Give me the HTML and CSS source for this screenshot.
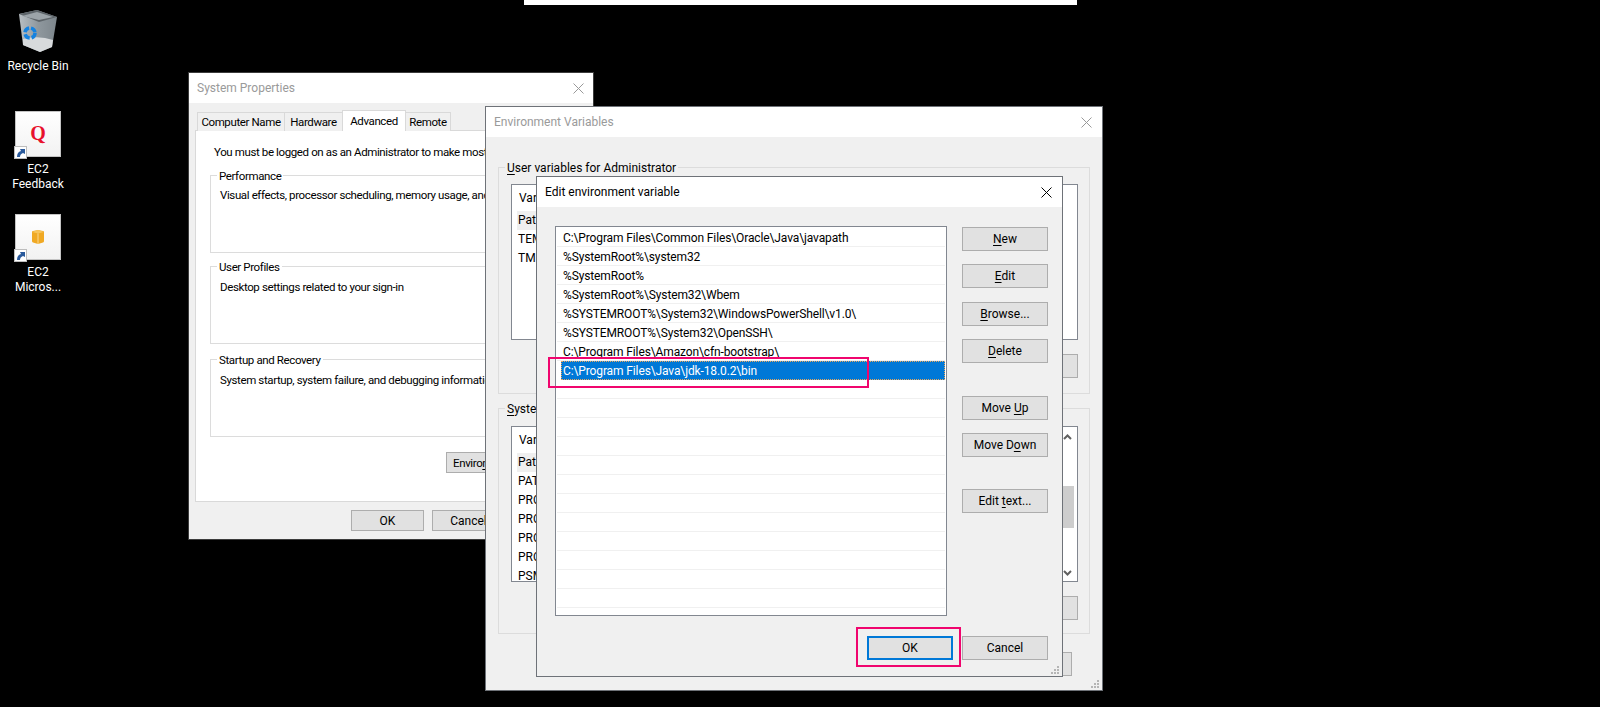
FILE: index.html
```html
<!DOCTYPE html>
<html lang="en">
<head>
<meta charset="utf-8">
<title>Environment variables</title>
<link rel="stylesheet" href="styles.css">
</head>
<body>
<main class="desktop">
  <div class="strip"></div>

  <div class="desk-icon recycle">
    <svg class="bin" viewBox="0 0 38 42" width="38" height="42">
      <defs>
        <linearGradient id="binfill" x1="0" y1="0" x2="1" y2="0">
          <stop offset="0" stop-color="#b9bfc3"/>
          <stop offset="0.5" stop-color="#8f989e"/>
          <stop offset="1" stop-color="#7d868c"/>
        </linearGradient>
      </defs>
      <path d="M0 4 L18 0 L38 7 L33 37 L21 42 L4 35 Z" fill="url(#binfill)"/>
      <path d="M0 4 L18 0 L38 7 L20 12 Z" fill="#5d6469"/>
      <path d="M3 6 L18 2 L34 7 L20 10 Z" fill="#9ca4a9"/>
      <path d="M4 29 Q20 25 34 30 L33 37 L21 42 L4 35 Z" fill="#d7dadc"/>
      <circle cx="11" cy="23" r="5" fill="none" stroke="#1482e0" stroke-width="3.500" stroke-dasharray="6 2"/>
    </svg>
    <span class="desk-label">Recycle Bin</span>
  </div>

  <div class="desk-icon feedback">
    <div class="tile">
      <span class="q">Q</span>
      <svg class="shortcut" viewBox="0 0 13 13" width="13" height="13">
        <rect x="0.500" y="0.500" width="12" height="12" fill="#fff" stroke="#bdbdbd"/>
        <path d="M3 11 Q3 6 7 5 L6 3 L11 3 L11 8 L9 7 Q6 8 6 11 Z" fill="#2a5a9c"/>
      </svg>
    </div>
    <span class="desk-label">EC2<br>Feedback</span>
  </div>

  <div class="desk-icon micro">
    <div class="tile">
      <svg class="cube" viewBox="0 0 14 14" width="14" height="14">
        <path d="M1 2 Q1 1 2 1 L7 0 L12 1 Q13 1 13 2 L13 11 Q13 12 12 12.500 L7 14 L2 12.500 Q1 12 1 11 Z" fill="#f0a924"/>
        <path d="M1 2 L7 3.500 L13 2 L7 0 Z" fill="#f7c55c"/>
        <path d="M6.500 3.500 H7.500 V14 H6.500 Z" fill="#f9d88f"/>
      </svg>
      <svg class="shortcut" viewBox="0 0 13 13" width="13" height="13">
        <rect x="0.500" y="0.500" width="12" height="12" fill="#fff" stroke="#bdbdbd"/>
        <path d="M3 11 Q3 6 7 5 L6 3 L11 3 L11 8 L9 7 Q6 8 6 11 Z" fill="#2a5a9c"/>
      </svg>
    </div>
    <span class="desk-label">EC2<br>Micros...</span>
  </div>

  <section class="window sysprops">
    <header class="titlebar inactive">
      <span>System Properties</span>
      <svg class="close" viewBox="0 0 11 11" width="11" height="11"><path d="M0.500 0.500 L10.500 10.500 M10.500 0.500 L0.500 10.500" stroke="#999" fill="none"/></svg>
    </header>
    <div class="sys-body">
      <nav class="tabs">
        <span class="tab t1">Computer Name</span>
        <span class="tab t2">Hardware</span>
        <span class="tab t3 current">Advanced</span>
        <span class="tab t4">Remote</span>
      </nav>
      <div class="panel">
        <p class="notice">You must be logged on as an Administrator to make most of these changes.</p>
        <fieldset class="group g-perf">
          <legend>Performance</legend>
          <p>Visual effects, processor scheduling, memory usage, and virtual memory</p>
        </fieldset>
        <fieldset class="group g-prof">
          <legend>User Profiles</legend>
          <p>Desktop settings related to your sign-in</p>
        </fieldset>
        <fieldset class="group g-start">
          <legend>Startup and Recovery</legend>
          <p>System startup, system failure, and debugging information</p>
        </fieldset>
        <div class="env-row"><span class="btn env-btn"><span>Enviro<u>n</u>ment Variables...</span></span></div>
      </div>
      <div class="sys-actions">
        <span class="btn sys-btn">OK</span>
        <span class="btn sys-btn">Cancel</span>
      </div>
    </div>
  </section>

  <section class="window envvars">
    <header class="titlebar inactive">
      <span>Environment Variables</span>
      <svg class="close" viewBox="0 0 11 11" width="11" height="11"><path d="M0.500 0.500 L10.500 10.500 M10.500 0.500 L0.500 10.500" stroke="#999" fill="none"/></svg>
    </header>
    <div class="env-body">
      <fieldset class="group env-group user">
        <legend><u>U</u>ser variables for Administrator</legend>
        <div class="var-list user-list">
          <div class="var-rows">
            <div class="var-head">Variable</div>
            <div class="var-row first">Path</div>
            <div class="var-row">TEMP</div>
            <div class="var-row">TMP</div>
          </div>
        </div>
        <div class="env-actions"><span class="btn env-action"></span></div>
      </fieldset>
      <fieldset class="group env-group system">
        <legend><u>S</u>ystem variables</legend>
        <div class="var-list sys-list">
          <div class="var-rows">
            <div class="var-head">Variable</div>
            <div class="var-row first">Path</div>
            <div class="var-row">PATHEXT</div>
            <div class="var-row">PROCESSOR_ARCHITECTURE</div>
            <div class="var-row">PROCESSOR_IDENTIFIER</div>
            <div class="var-row">PROCESSOR_LEVEL</div>
            <div class="var-row">PROCESSOR_REVISION</div>
            <div class="var-row">PSModulePath</div>
          </div>
          <div class="scrollbar">
            <svg viewBox="0 0 9 6" width="9" height="6"><path d="M1 5 L4.500 1.500 L8 5" stroke="#606060" stroke-width="2" fill="none"/></svg>
            <div class="thumb"></div>
            <svg viewBox="0 0 9 6" width="9" height="6"><path d="M1 1 L4.500 4.500 L8 1" stroke="#606060" stroke-width="2" fill="none"/></svg>
          </div>
        </div>
        <div class="env-actions"><span class="btn env-action"></span></div>
      </fieldset>
      <div class="env-foot"><span class="btn foot-btn"></span></div>
    </div>
    <svg class="grip" viewBox="0 0 8 8" width="8" height="8"><path d="M6 0h2v2h-2zM3 3h2v2h-2zM6 3h2v2h-2zM0 6h2v2h-2zM3 6h2v2h-2zM6 6h2v2h-2z" fill="#b5b5b5"/></svg>
  </section>

  <section class="window editvar">
    <header class="titlebar">
      <span>Edit environment variable</span>
      <svg class="close" viewBox="0 0 11 11" width="11" height="11"><path d="M0.500 0.500 L10.500 10.500 M10.500 0.500 L0.500 10.500" stroke="#000" fill="none"/></svg>
    </header>
    <div class="edit-body">
      <div class="edit-main">
        <ul class="path-list">
          <li>C:\Program Files\Common Files\Oracle\Java\javapath</li>
          <li>%SystemRoot%\system32</li>
          <li>%SystemRoot%</li>
          <li>%SystemRoot%\System32\Wbem</li>
          <li>%SYSTEMROOT%\System32\WindowsPowerShell\v1.0\</li>
          <li>%SYSTEMROOT%\System32\OpenSSH\</li>
          <li>C:\Program Files\Amazon\cfn-bootstrap\</li>
          <li class="selected">C:\Program Files\Java\jdk-18.0.2\bin</li>
          <li></li><li></li><li></li><li></li><li></li><li></li>
          <li></li><li></li><li></li><li></li><li></li><li></li>
        </ul>
        <div class="side">
          <span class="btn side-btn"><span><u>N</u>ew</span></span>
          <span class="btn side-btn s-edit"><span><u>E</u>dit</span></span>
          <span class="btn side-btn s-browse"><span><u>B</u>rowse...</span></span>
          <span class="btn side-btn s-delete"><span><u>D</u>elete</span></span>
          <span class="btn side-btn s-up"><span>Move <u>U</u>p</span></span>
          <span class="btn side-btn s-down"><span>Move D<u>o</u>wn</span></span>
          <span class="btn side-btn s-text"><span>Edit <u>t</u>ext...</span></span>
        </div>
      </div>
      <div class="edit-foot">
        <span class="btn side-btn default">OK</span>
        <span class="btn side-btn">Cancel</span>
      </div>
    </div>
    <svg class="grip" viewBox="0 0 8 8" width="8" height="8"><path d="M6 0h2v2h-2zM3 3h2v2h-2zM6 3h2v2h-2zM0 6h2v2h-2zM3 6h2v2h-2zM6 6h2v2h-2z" fill="#b5b5b5"/></svg>
  </section>

  <div class="mark mark-row"></div>
  <div class="mark mark-ok"></div>
</main>
</body>
</html>
```
FILE: styles.css
```css
* { box-sizing: border-box; }
html, body { margin: 0; height: 100%; background: #000; }
body { overflow: hidden; font: 12px/16px Roboto, "Open Sans", sans-serif; color: #000; }
p { margin: 0; }
u { text-underline-offset: 2px; text-decoration-thickness: 1px; }

.desktop { position: relative; width: 1600px; height: 707px; background: #000; overflow: hidden; }
.strip { position: absolute; left: 524px; top: 0; width: 553px; height: 5px; background: #fff; }

/* desktop icons */
.desk-icon { position: absolute; left: 0; width: 76px; display: flex; flex-direction: column; align-items: center; color: #fff; }
.desk-label { text-align: center; line-height: 15px; text-shadow: 0 0 2px #000; }
.recycle { top: 10px; gap: 7px; }
.feedback { top: 111px; gap: 5px; }
.micro { top: 214px; gap: 5px; }
.bin { display: block; }
.tile { position: relative; width: 46px; height: 46px; background: linear-gradient(#fff, #f2f2f2); border: 1px solid #c4c4c4; display: flex; align-items: center; justify-content: center; }
.shortcut { position: absolute; left: -2px; bottom: -3px; display: block; }
.q { font: bold 20px/1 "Liberation Serif", serif; color: #e8112d; margin-bottom: 2px; }
.cube { display: block; }

/* windows */
.window { position: absolute; background: #f0f0f0; border: 1px solid #6e7278; display: flex; flex-direction: column; }
.sysprops { left: 188px; top: 72px; width: 406px; height: 468px; border-color: #3c3c3c; }
.envvars { left: 485px; top: 106px; width: 618px; height: 585px; }
.editvar { left: 536px; top: 176px; width: 527px; height: 501px; }
.titlebar { height: 30px; flex: none; background: #fff; display: flex; align-items: center; justify-content: space-between; padding: 0 10px 0 8px; color: #000; }
.titlebar.inactive { color: #9a9a9a; }
.sysprops .titlebar { padding-right: 9px; }
.close { display: block; flex: none; }
.grip { position: absolute; right: 3px; bottom: 2px; }

.btn { display: flex; align-items: center; justify-content: center; background: #e1e1e1; border: 1px solid #adadad; white-space: nowrap; }

/* system properties */
.sys-body { flex: 1; display: flex; flex-direction: column; padding: 7px 9px 0 6px; }
.tabs { display: flex; height: 21px; padding-left: 3px; align-items: flex-end; position: relative; z-index: 1; margin-bottom: -1px; font-size: 11.500px; letter-spacing: -0.380px; }
.tab { height: 19px; background: #f0f0f0; border: 1px solid #d9d9d9; border-bottom: none; margin-left: -1px; display: flex; align-items: center; justify-content: center; white-space: nowrap; }
.t1 { width: 88px; }
.t2 { width: 59px; }
.t3 { width: 64px; height: 21px; background: #fff; position: relative; }
.t4 { width: 46px; }
.panel { height: 372px; background: #fff; border: 1px solid #d9d9d9; padding: 13px 0 0 14px; display: flex; flex-direction: column; font-size: 11.500px; letter-spacing: -0.380px; }
.notice { white-space: nowrap; padding-left: 4px; }
.group { margin: 0; min-width: 0; border: 1px solid #dcdcdc; padding: 0; }
.group legend { margin-left: -3px; padding: 2px 2px 0; line-height: 16px; white-space: nowrap; }
.panel .group { width: 374px; height: 87px; padding: 4px 0 0 9px; }
.panel .group p { white-space: nowrap; }
.panel .g-perf { margin-top: 6px; padding-top: 3px; }
.panel .g-prof { margin-top: 4px; }
.panel .g-start { margin-top: 6px; }
.env-row { display: flex; margin-top: 15px; padding-left: 236px; }
.env-btn { width: 140px; height: 21px; justify-content: flex-start; padding-left: 6px; flex: none; }
.sys-actions { display: flex; gap: 8px; padding: 8px 0 0 156px; }
.sys-btn { width: 73px; height: 21px; }

/* environment variables */
.env-body { flex: 1; display: flex; flex-direction: column; padding: 21px 12px 0 12px; }
.env-group { height: 236px; padding: 8px 11px 0 12px; }
.env-group legend { margin-left: -6px; }
.env-group.system { margin-top: 5px; height: 235px; padding-top: 9px; }
.var-list { height: 156px; background: #fff; border: 1px solid #828790; display: flex; overflow: hidden; }
.var-rows { flex: 1; padding: 4px 0 0 5px; }
.var-head { height: 22px; line-height: 18px; padding-left: 2px; }
.var-row { height: 19px; line-height: 19px; padding-left: 1px; }
.var-row.first { background: #efefef; width: 160px; }
.scrollbar { width: 19px; flex: none; display: flex; flex-direction: column; align-items: center; padding: 7px 0 5px; background: #fff; }
.thumb { width: 15px; height: 42px; margin: 46px 2px 42px 0; background: #cdcdcd; }
.env-actions { display: flex; justify-content: flex-end; margin-top: 14px; }
.env-action { width: 86px; height: 24px; }
.env-foot { display: flex; justify-content: flex-end; padding: 18px 18px 0 0; }
.foot-btn { width: 86px; height: 24px; }

/* edit dialog */
.edit-body { flex: 1; display: flex; flex-direction: column; padding: 19px 14px 0 18px; }
.edit-main { display: flex; gap: 15px; }
.path-list { list-style: none; margin: 0; width: 392px; height: 390px; padding: 1px 1px 0; background: #fff; border: 1px solid #828790; flex: none; letter-spacing: -0.120px; }
.path-list li { height: 19px; line-height: 21px; border-bottom: 1px solid #f0f0f0; padding-left: 6px; }
.path-list li.selected { border-bottom: none; margin-left: 4px; padding-left: 2px; background: #0078d7; color: #fff; outline: 1px dotted #e8a75c; outline-offset: -1px; }
.side { display: flex; flex-direction: column; padding-top: 1px; }
.side-btn { width: 86px; height: 24px; flex: none; }
.s-edit { margin-top: 13px; }
.s-browse { margin-top: 14px; }
.s-delete { margin-top: 13px; }
.s-up { margin-top: 33px; }
.s-down { margin-top: 13px; }
.s-text { margin-top: 32px; }
.edit-foot { display: flex; justify-content: flex-end; gap: 9px; padding-top: 20px; }
.default { border: 2px solid #0078d7; }

/* annotations */
.mark { position: absolute; border: 2px solid #f0056e; pointer-events: none; }
.mark-row { left: 548px; top: 357px; width: 321px; height: 31px; }
.mark-ok { left: 856px; top: 627px; width: 105px; height: 40px; }
```
